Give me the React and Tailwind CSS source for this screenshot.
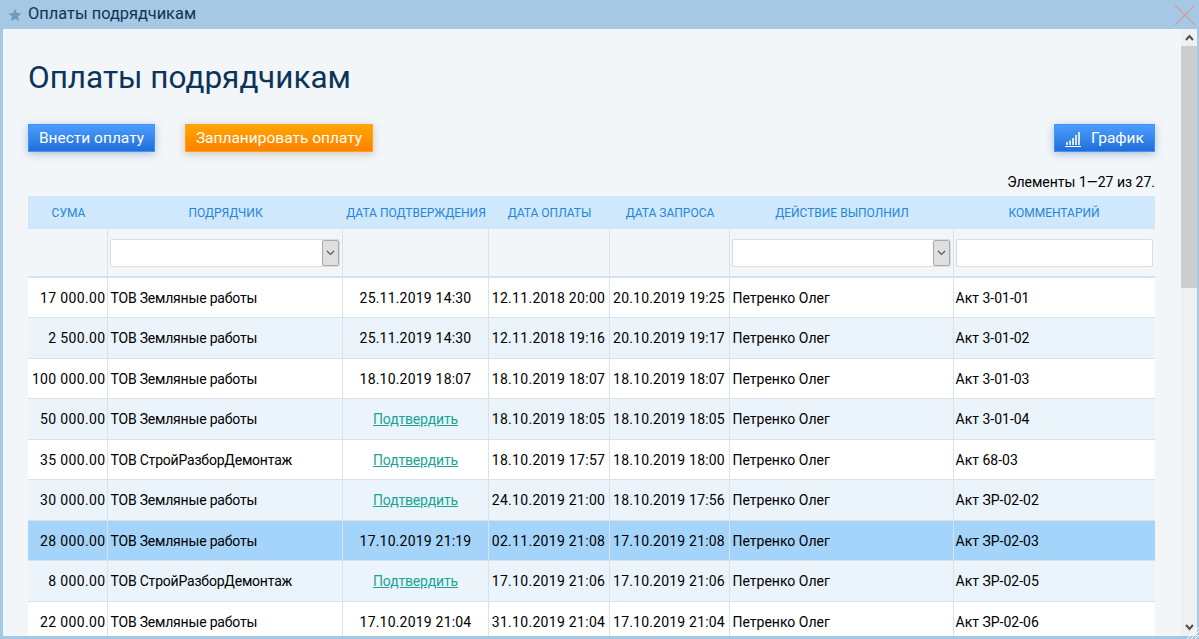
import React from "react";

const rows = [
  ["17 000.00", "ТОВ Земляные работы", "25.11.2019 14:30", "12.11.2018 20:00", "20.10.2019 19:25", "Петренко Олег", "Акт 3-01-01"],
  ["2 500.00", "ТОВ Земляные работы", "25.11.2019 14:30", "12.11.2018 19:16", "20.10.2019 19:17", "Петренко Олег", "Акт 3-01-02"],
  ["100 000.00", "ТОВ Земляные работы", "18.10.2019 18:07", "18.10.2019 18:07", "18.10.2019 18:07", "Петренко Олег", "Акт 3-01-03"],
  ["50 000.00", "ТОВ Земляные работы", null, "18.10.2019 18:05", "18.10.2019 18:05", "Петренко Олег", "Акт 3-01-04"],
  ["35 000.00", "ТОВ СтройРазборДемонтаж", null, "18.10.2019 17:57", "18.10.2019 18:00", "Петренко Олег", "Акт 68-03"],
  ["30 000.00", "ТОВ Земляные работы", null, "24.10.2019 21:00", "18.10.2019 17:56", "Петренко Олег", "Акт ЗР-02-02"],
  ["28 000.00", "ТОВ Земляные работы", "17.10.2019 21:19", "02.11.2019 21:08", "17.10.2019 21:08", "Петренко Олег", "Акт ЗР-02-03"],
  ["8 000.00", "ТОВ СтройРазборДемонтаж", null, "17.10.2019 21:06", "17.10.2019 21:06", "Петренко Олег", "Акт ЗР-02-05"],
  ["22 000.00", "ТОВ Земляные работы", "17.10.2019 21:04", "31.10.2019 21:04", "17.10.2019 21:04", "Петренко Олег", "Акт ЗР-02-06"],
];

const heads = ["Сума", "Подрядчик", "Дата подтверждения", "Дата оплаты", "Дата запроса", "Действие выполнил", "Комментарий"];
const widths = [79, 235, 146, 121, 120, 224, 202];

function Select() {
  return (
    <div className="h-[28px] mx-[2px] flex bg-white border border-[#d8dde3] rounded-[2px]">
      <div className="flex-1" />
      <div className="w-[17px] bg-[#dfdfdf] border border-[#a9a9a9] rounded-[2px] flex items-center justify-center">
        <svg width="9" height="6" viewBox="0 0 9 6" fill="none" stroke="#555" strokeWidth="1.1"><path d="M1 1l3.5 3.5L8 1" /></svg>
      </div>
    </div>
  );
}

const blue = "bg-gradient-to-b from-[#4c9dff] to-[#1f6fd8] border border-[#3f93fb] shadow-[0_2px_8px_rgba(40,90,160,0.35)]";

export default function App() {
  return (
    <div className="relative w-[1199px] h-[639px] overflow-hidden flex flex-col bg-[#a5c9e5] font-['Roboto',sans-serif]">
      <div className="h-[29px] shrink-0 flex items-center pl-[8px] pr-[3px]">
        <svg width="14" height="14" viewBox="0 0 24 24" fill="#6a9cc6"><path d="M12 1.5l3.2 7.2 7.8.8-5.9 5.2 1.7 7.7L12 18.4l-6.8 4 1.7-7.7L1 9.5l7.8-.8z" /></svg>
        <span className="ml-[6px] text-[16.4px] text-[#0f3554] leading-none">Оплаты подрядчикам</span>
        <svg className="ml-auto mt-[1px]" width="22" height="22" viewBox="0 0 22 22" stroke="#d99a9f" strokeWidth="1.2"><path d="M1 1l20 20M21 1L1 21" /></svg>
      </div>
      <div className="flex-1 min-h-0 ml-[3px] mr-[2px] mb-[3px] flex bg-[#f2f6f9]">
        <main className="flex-1 min-w-0 overflow-hidden pl-[25px] pr-[26px]">
          <h1 className="mt-[29px] h-[40px] text-[31.5px] leading-[40px] font-normal text-[#0c3358]">Оплаты подрядчикам</h1>
          <div className="mt-[26px] flex items-start text-white text-[15.5px]">
            <button className={`h-[28px] w-[127px] pt-[1px] ${blue}`}>Внести оплату</button>
            <button className="ml-[30px] h-[28px] w-[188px] pt-[1px] bg-gradient-to-b from-[#ffa600] to-[#ff8000] border border-[#ffa01e] shadow-[0_2px_8px_rgba(120,90,40,0.3)]">Запланировать оплату</button>
            <button className={`ml-auto h-[28px] w-[101px] pt-[1px] flex items-center justify-center gap-[10px] ${blue}`}>
              <svg width="16" height="16" viewBox="0 0 16 16" stroke="#fff" fill="none"><path strokeWidth="1" d="M0 15.5h16" /><path strokeWidth="1.6" d="M2 14v-3M5 14V9.5M8 14V7M11 14V4M14 14V1" /></svg>
              <span>График</span>
            </button>
          </div>
          <div className="mt-[20px] h-[24px] text-right text-[14px] leading-[20px] text-black">Элементы 1—27 из 27.</div>
          <table className="w-[1127px] table-fixed border-collapse text-[14px] text-black">
            <colgroup>
              {widths.map((w, i) => <col key={i} style={{ width: w }} />)}
            </colgroup>
            <thead>
              <tr className="h-[33px] bg-[#cfe8fc]">
                {heads.map((h, i) => (
                  <th key={h} className={`p-0 font-normal text-[12px] uppercase text-[#2586d9] text-center ${i < 6 ? "pl-[2px]" : ""}`}>{h}</th>
                ))}
              </tr>
              <tr className="h-[48px] border-b-2 border-[#d9e1e9]">
                <th className="p-0 border-r border-[#d9e1e9]" />
                <th className="p-0 border-r border-[#d9e1e9] font-normal"><Select /></th>
                <th className="p-0 border-r border-[#d9e1e9]" />
                <th className="p-0 border-r border-[#d9e1e9]" />
                <th className="p-0 border-r border-[#d9e1e9]" />
                <th className="p-0 border-r border-[#d9e1e9] font-normal"><Select /></th>
                <th className="p-0 font-normal">
                  <div className="h-[28px] mx-[2px] bg-white border border-[#d8dde3] rounded-[2px]" />
                </th>
              </tr>
            </thead>
            <tbody>
              {rows.map((r, i) => (
                <tr
                  key={i}
                  className={`border-b border-[#d9e1e9] [&>td]:pt-[2px] ${i % 2 === 0 ? "h-[40px]" : "h-[41px]"} ${i === 6 ? "bg-[#a4d4f9]" : i % 2 ? "bg-[#ecf4fb]" : "bg-white"}`}
                >
                  <td className="p-0 pr-[1px] text-right border-r border-[#d9e1e9] whitespace-nowrap tracking-[0.35px]">{r[0]}</td>
                  <td className="p-0 pl-[3px] border-r border-[#d9e1e9] whitespace-nowrap tracking-[-0.2px]">{r[1]}</td>
                  <td className="p-0 pl-[1px] text-center border-r border-[#d9e1e9] whitespace-nowrap tracking-[0.2px]">
                    {r[2] ?? <a href="#" className="text-[#16a595] underline tracking-[-0.15px]">Подтвердить</a>}
                  </td>
                  <td className="p-0 text-center border-r border-[#d9e1e9] whitespace-nowrap tracking-[0.3px]">{r[3]}</td>
                  <td className="p-0 text-center border-r border-[#d9e1e9] whitespace-nowrap tracking-[0.2px]">{r[4]}</td>
                  <td className="p-0 pl-[3px] border-r border-[#d9e1e9] whitespace-nowrap">{r[5]}</td>
                  <td className="p-0 pl-[2px] whitespace-nowrap">{r[6]}</td>
                </tr>
              ))}
            </tbody>
          </table>
        </main>
        <div className="relative w-[16px] shrink-0 bg-[#f0f0f0] flex flex-col">
          <div className="h-[17px] flex items-center justify-center">
            <svg width="9" height="7" viewBox="0 0 9 7" fill="none" stroke="#505050" strokeWidth="2"><path d="M1 6l3.5-4L8 6" /></svg>
          </div>
          <div className="h-[242px] bg-[#cdcdcd]" />
          <div className="mt-auto h-[17px] flex items-center justify-center">
            <svg width="9" height="7" viewBox="0 0 9 7" fill="none" stroke="#505050" strokeWidth="2"><path d="M1 1l3.5 4L8 1" /></svg>
          </div>
        </div>
      </div>
      <svg className="absolute right-0 bottom-0" width="14" height="14" viewBox="0 0 14 14" stroke="#fff" strokeWidth="1"><path d="M14 2L2 14M14 6L6 14M14 10l-4 4" /></svg>
    </div>
  );
}
